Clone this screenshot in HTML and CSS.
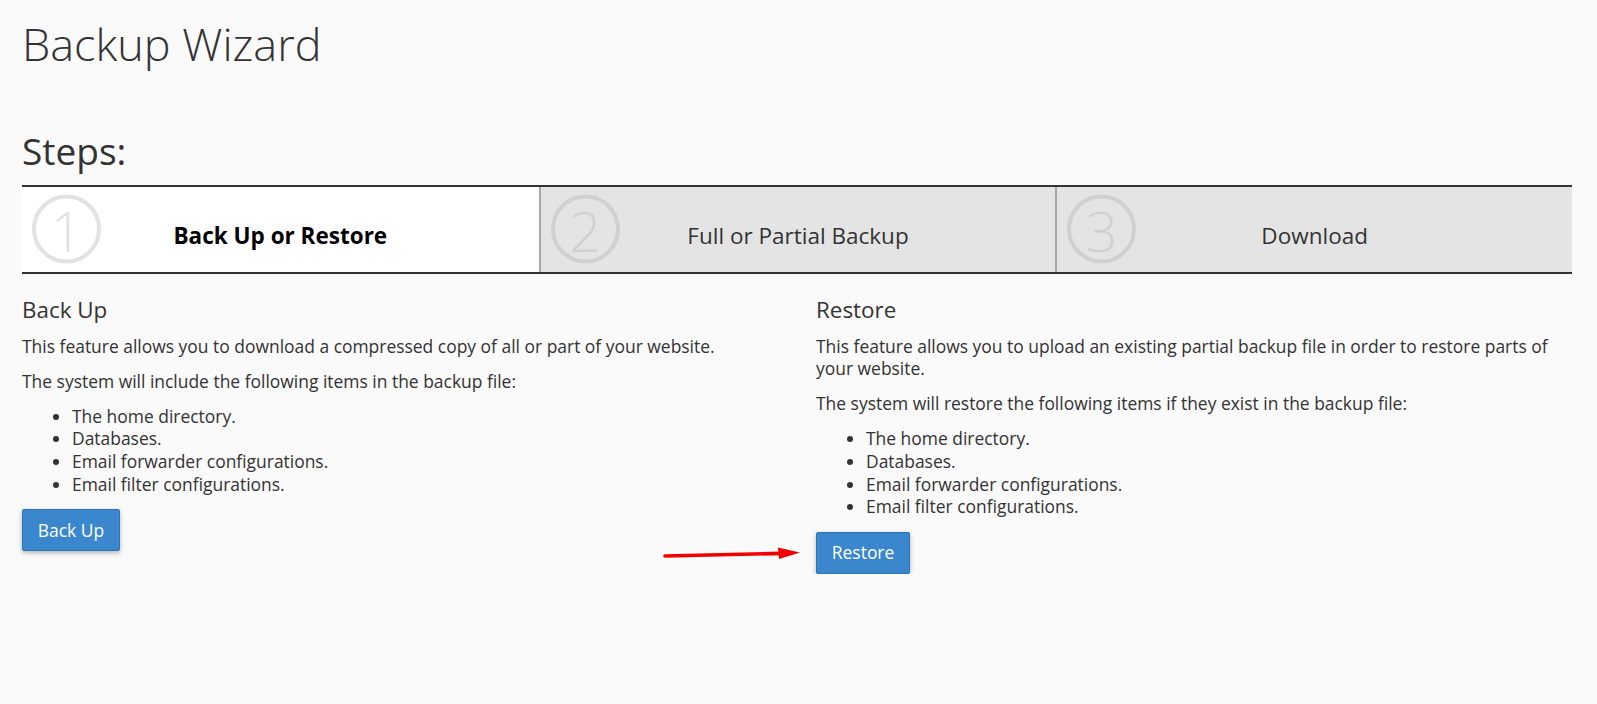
FILE: index.html
```html
<!DOCTYPE html>
<html lang="en">
<head>
<meta charset="utf-8">
<title>Backup Wizard</title>
<link rel="stylesheet" href="styles.css">
</head>
<body>
<div class="page">
  <h1 class="title">Backup Wizard</h1>
  <h2 class="steps-title">Steps:</h2>
  <div class="steps">
    <div class="step active"><span class="num">1</span><span class="label">Back Up or Restore</span></div>
    <div class="step"><span class="num">2</span><span class="label">Full or Partial Backup</span></div>
    <div class="step"><span class="num">3</span><span class="label">Download</span></div>
  </div>
  <div class="cols">
    <section class="col">
      <h3 class="col-title">Back Up</h3>
      <p>This feature allows you to download a compressed copy of all or part of your website.</p>
      <p>The system will include the following items in the backup file:</p>
      <ul class="items">
        <li>The home directory.</li>
        <li>Databases.</li>
        <li>Email forwarder configurations.</li>
        <li>Email filter configurations.</li>
      </ul>
      <button class="btn" type="button">Back Up</button>
    </section>
    <section class="col">
      <h3 class="col-title">Restore</h3>
      <p>This feature allows you to upload an existing partial backup file in order to restore parts of your website.</p>
      <p>The system will restore the following items if they exist in the backup file:</p>
      <ul class="items">
        <li>The home directory.</li>
        <li>Databases.</li>
        <li>Email forwarder configurations.</li>
        <li>Email filter configurations.</li>
      </ul>
      <button class="btn" type="button">Restore</button>
    </section>
  </div>
</div>
<svg class="arrow" width="145" height="20" viewBox="0 0 145 20" aria-hidden="true">
  <line x1="5" y1="12" x2="121" y2="9.4" stroke="#f20000" stroke-width="3.6" stroke-linecap="round"/>
  <polygon points="118,3.6 140,8.6 119,15" fill="#f20000"/>
</svg>
</body>
</html>
```
FILE: styles.css
```css
html, body {
  margin: 0;
  padding: 0;
  background: #fafafa;
}
body {
  font-family: "Open Sans", "Liberation Sans", sans-serif;
  color: #333;
  font-size: 17.45px;
  line-height: 22.7px;
}
.page {
  padding: 0 25px 0 22px;
}
.title {
  margin: 18.5px 0 0;
  font-size: 45px;
  font-weight: 300;
  line-height: 50.6px;
  color: #333;
}
.steps-title {
  margin: 62.2px 0 0;
  font-size: 37px;
  font-weight: 400;
  line-height: 40.7px;
  color: #333;
}
.steps {
  margin-top: 13px;
  display: grid;
  grid-template-columns: 1fr 1fr 1fr;
  border-top: 2px solid #333;
  border-bottom: 2px solid #333;
}
.step {
  position: relative;
  box-sizing: border-box;
  height: 85px;
  padding-top: 14px;
  display: flex;
  align-items: center;
  justify-content: center;
  background: #e4e4e4;
  color: #333;
}
.step + .step {
  border-left: 2px solid #a8a8a8;
}
.step.active {
  background: #fff;
  color: #000;
}
.step.active .label {
  font-weight: 700;
}
.label {
  font-size: 22.5px;
  line-height: 30px;
}
.num {
  position: absolute;
  left: 10px;
  top: 50%;
  transform: translateY(-50%);
  box-sizing: border-box;
  width: 69px;
  height: 69px;
  border: 4px solid #d0d0d0;
  border-radius: 50%;
  display: flex;
  align-items: center;
  justify-content: center;
  font-size: 56px;
  font-weight: 300;
  line-height: 1;
  color: #d0d0d0;
}
.step.active .num {
  border-color: #e2e2e2;
  color: #e2e2e2;
}
.cols {
  display: grid;
  grid-template-columns: 1fr 1fr;
  column-gap: 38px;
}
.col-title {
  margin: 22.6px 0 12px;
  font-size: 22.4px;
  font-weight: 400;
  line-height: 26px;
  color: #333;
}
.col p {
  margin: 0 0 12.3px;
}
.items {
  margin: 0 0 13.6px;
  padding-left: 50px;
}
.btn {
  display: inline-block;
  font-family: inherit;
  font-size: 17.45px;
  line-height: 22.7px;
  padding: 8.6px 14.8px;
  border: 1px solid #2f73b3;
  border-radius: 2px;
  background: #3a87cd;
  color: #fff;
  box-shadow: 0 2px 5px rgba(0, 0, 0, 0.28);
  cursor: pointer;
}
.arrow {
  position: absolute;
  left: 660px;
  top: 544px;
}
```
